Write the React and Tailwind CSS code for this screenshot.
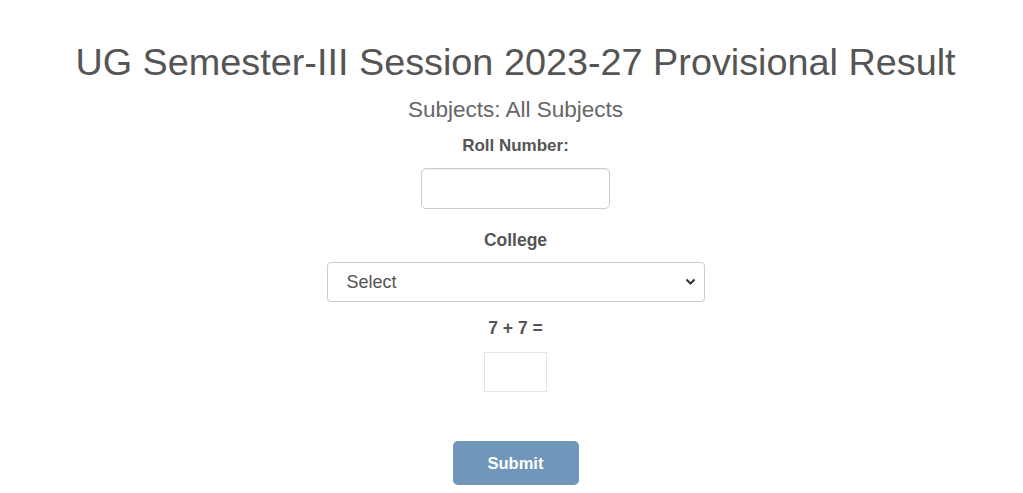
export default function App() {
  return (
    <div className="min-h-screen bg-white pl-2 pt-[38px] text-center font-['Liberation_Sans',Arial,sans-serif] text-[#555]">
      <h1 className="text-[37.8px] leading-[48px]">UG Semester-III Session 2023-27 Provisional Result</h1>
      <p className="mt-[11px] text-[22.5px] leading-[26px] text-[#666]">Subjects: All Subjects</p>

      <form className="flex flex-col items-center">
        <label className="mt-[11px] text-[17px] font-bold leading-[24px]">Roll Number:</label>
        <input
          type="text"
          className="mt-[10px] h-[41px] w-[189px] rounded-[5px] border border-[#ccc] bg-white px-3 shadow-[inset_0_1px_1px_rgba(0,0,0,0.075)] outline-none"
        />

        <label className="mt-[19px] text-[17.5px] font-bold leading-[24px]">College</label>
        <div className="relative mt-[10px] w-[378px]">
          <select className="h-[40px] w-full appearance-none rounded-[4px] border border-[#ccc] bg-white pl-[19px] text-left text-[18px] text-[#555] outline-none">
            <option>Select</option>
          </select>
          <svg
            className="pointer-events-none absolute right-[9px] top-[16px]"
            width="11"
            height="8"
            viewBox="0 0 11 8"
          >
            <path d="M1.5 1.5 L5.5 5.5 L9.5 1.5" fill="none" stroke="#333" strokeWidth="2" />
          </svg>
        </div>

        <label className="mt-[14px] text-[17.5px] font-bold leading-[24px]">7 + 7 =</label>
        <input
          type="text"
          className="mt-[12px] h-[40px] w-[63px] border border-[#e4e4e4] bg-white outline-none"
        />

        <button
          type="button"
          className="mt-[49px] h-[44px] w-[126px] rounded-[5px] bg-[#7097b9] text-[16.5px] font-bold text-white"
        >
          Submit
        </button>
      </form>
    </div>
  );
}
